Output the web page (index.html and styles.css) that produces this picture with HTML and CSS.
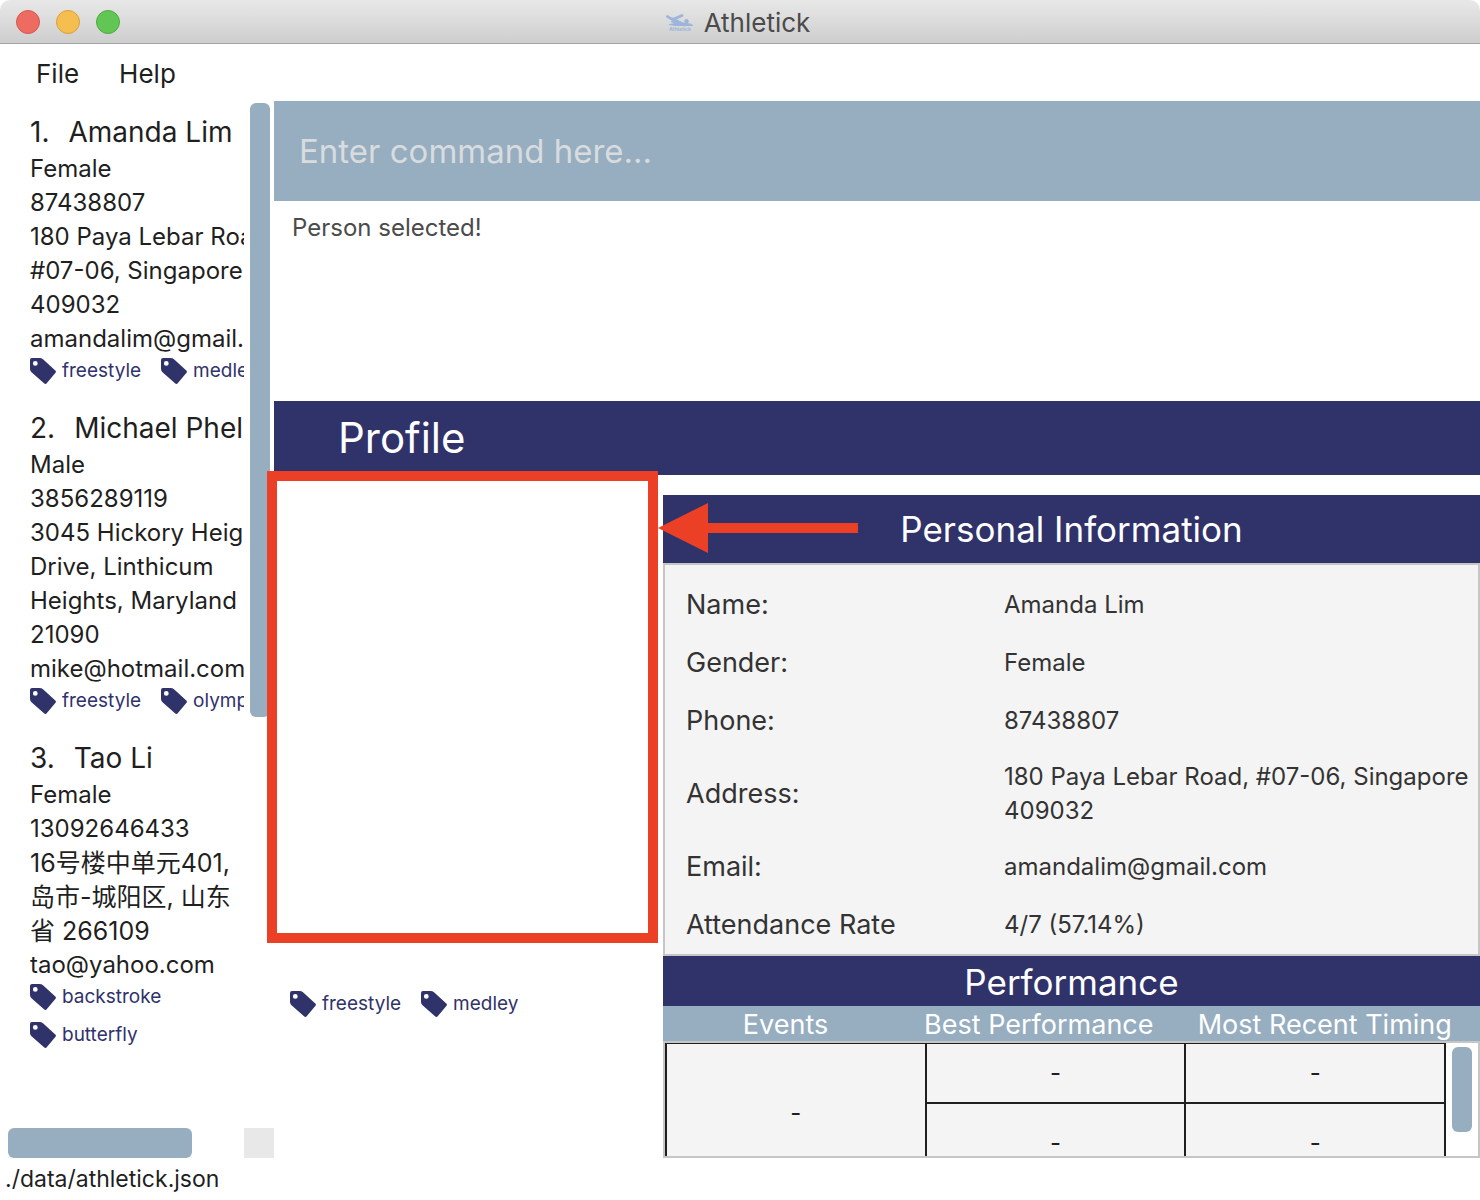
FILE: index.html
```html
<!DOCTYPE html>
<html lang="en">
<head>
<meta charset="utf-8">
<title>Athletick</title>
<link rel="stylesheet" href="styles.css">
</head>
<body>
<svg class="defs" aria-hidden="true">
  <symbol id="tag" viewBox="0 0 26 26">
    <path fill-rule="evenodd" d="M2 0H9.500Q11.500 0 13 1.200L25.300 12.500Q26.500 13.700 25.300 15L16.700 25.200Q15.500 26.600 14 25.300L1.500 14.200Q0 12.800 0 11V2Q0 0 2 0ZM5.300 3A2.400 2.400 0 1 0 5.300 7.800A2.400 2.400 0 1 0 5.300 3Z"/>
  </symbol>
</svg>

<header class="titlebar">
  <div class="lights">
    <button class="light light-close" aria-label="Close"></button>
    <button class="light light-min" aria-label="Minimise"></button>
    <button class="light light-max" aria-label="Zoom"></button>
  </div>
  <h1 class="title">
    <svg class="logo" viewBox="0 0 28 18" aria-hidden="true">
      <path d="M1.500 2.500Q5 5.500 8 5L16 1.500" fill="none" stroke="#9db5db" stroke-width="2.800" stroke-linecap="round" stroke-linejoin="round"/>
      <path d="M5 7.500L10 5.500L17 9L24 10L27 11.500H10L3 10.500L10 9.500Z" fill="#9db5db" stroke="#9db5db" stroke-width="1" stroke-linejoin="round"/>
      <circle cx="20.500" cy="7.300" r="2.200" fill="#9db5db"/>
      <text x="3" y="17" class="logo-text">Athletick</text>
    </svg>
    Athletick
  </h1>
</header>

<nav class="menubar">
  <button class="menu">File</button>
  <button class="menu">Help</button>
</nav>

<div class="main">
  <aside class="sidebar">
    <div class="sidebar-view">
      <ol class="people">
        <li class="person">
          <h2 class="person-name"><span class="index">1.</span>Amanda Lim</h2>
          <p class="line">Female</p>
          <p class="line">87438807</p>
          <p class="line">180 Paya Lebar Road,<br>#07-06, Singapore<br>409032</p>
          <p class="line">amandalim@gmail.com</p>
          <div class="tags">
            <span class="tag"><svg class="tag-icon"><use href="#tag"/></svg>freestyle</span>
            <span class="tag"><svg class="tag-icon"><use href="#tag"/></svg>medley</span>
          </div>
        </li>
        <li class="person">
          <h2 class="person-name"><span class="index">2.</span>Michael Phelps</h2>
          <p class="line">Male</p>
          <p class="line">3856289119</p>
          <p class="line">3045 Hickory Heights<br>Drive, Linthicum<br>Heights, Maryland<br>21090</p>
          <p class="line">mike@hotmail.com</p>
          <div class="tags">
            <span class="tag"><svg class="tag-icon"><use href="#tag"/></svg>freestyle</span>
            <span class="tag"><svg class="tag-icon"><use href="#tag"/></svg>olympics</span>
          </div>
        </li>
        <li class="person">
          <h2 class="person-name"><span class="index">3.</span>Tao Li</h2>
          <p class="line">Female</p>
          <p class="line">13092646433</p>
          <p class="line" lang="zh">16号楼中单元401,<br>岛市-城阳区, 山东<br>省 266109</p>
          <p class="line">tao@yahoo.com</p>
          <div class="tags tags-stacked">
            <span class="tag"><svg class="tag-icon"><use href="#tag"/></svg>backstroke</span>
            <span class="tag"><svg class="tag-icon"><use href="#tag"/></svg>butterfly</span>
          </div>
        </li>
      </ol>
    </div>
    <div class="vtrack"><div class="vthumb"></div></div>
    <div class="htrack"><div class="hthumb"></div></div>
    <div class="corner"></div>
  </aside>

  <main class="content">
    <input class="command" type="text" placeholder="Enter command here..." aria-label="Command">
    <output class="result">Person selected!</output>
    <h2 class="profile-title">Profile</h2>
    <div class="profile">
      <section class="photo">
        <div class="photo-frame"></div>
        <div class="tags">
          <span class="tag"><svg class="tag-icon"><use href="#tag"/></svg>freestyle</span>
          <span class="tag"><svg class="tag-icon"><use href="#tag"/></svg>medley</span>
        </div>
      </section>
      <section class="details">
        <h3 class="info-title">Personal Information</h3>
        <svg class="arrow" viewBox="0 0 200 50" aria-hidden="true">
          <path d="M0 25L50 0V20H200V30H50V50Z" fill="#eb4026"/>
        </svg>
        <div class="info-panel">
          <table class="info">
            <tr><th scope="row">Name:</th><td>Amanda Lim</td></tr>
            <tr><th scope="row">Gender:</th><td>Female</td></tr>
            <tr><th scope="row">Phone:</th><td>87438807</td></tr>
            <tr class="tall"><th scope="row">Address:</th><td>180 Paya Lebar Road, #07-06, Singapore 409032</td></tr>
            <tr><th scope="row">Email:</th><td>amandalim@gmail.com</td></tr>
            <tr><th scope="row">Attendance Rate</th><td>4/7 (57.14%)</td></tr>
          </table>
        </div>
        <h3 class="perf-title">Performance</h3>
        <table class="perf-head">
          <tr><th class="col-events">Events</th><th class="col-best">Best Performance</th><th class="col-recent">Most Recent Timing</th></tr>
        </table>
        <div class="perf-body">
          <table class="perf">
            <tr class="perf-first"><td rowspan="2">-</td><td>-</td><td>-</td></tr>
            <tr class="perf-second"><td>-</td><td>-</td></tr>
          </table>
          <div class="perf-track"><div class="perf-thumb"></div></div>
        </div>
      </section>
    </div>
  </main>
</div>

<footer class="status">./data/athletick.json</footer>
</body>
</html>
```

FILE: styles.css
```css
:root {
  --navy: #30326a;
  --steel: #97adc0;
  --red: #eb4026;
  --panel: #f4f4f4;
  --line: #c6c6c6;
  --ink: #1f1f1f;
}

* { box-sizing: border-box; }

body {
  margin: 0;
  min-height: 100vh;
  display: flex;
  flex-direction: column;
  background: #fff;
  color: var(--ink);
  font: 400 24px/34px Inter, "Noto Sans CJK SC", sans-serif;
}

h1, h2, h3, p, ol { margin: 0; padding: 0; font-weight: 400; }
ol { list-style: none; }
table { border-collapse: collapse; table-layout: fixed; width: 100%; }
th, td { padding: 0; font-weight: 400; }
button { font: inherit; color: inherit; background: none; border: 0; padding: 0; }
.defs { display: none; }

/* Window title bar */
.titlebar {
  height: 44px;
  display: grid;
  grid-template-columns: 1fr auto 1fr;
  align-items: center;
  padding: 0 16px;
  border-bottom: 1px solid #a3a3a3;
  border-radius: 10px 10px 0 0;
  background: linear-gradient(#e8e8e8, #cecece);
}
.lights { display: flex; gap: 16px; }
.light { width: 24px; height: 24px; border-radius: 50%; border: 1px solid; }
.light-close { background: #ed6b60; border-color: #d8574d; }
.light-min { background: #f5bf50; border-color: #d9a03c; }
.light-max { background: #62c655; border-color: #4dab3f; }
.title { display: flex; align-items: center; gap: 10px; padding: 2px 4px 0 0; font-size: 26px; color: #4b4b4b; }
.logo { width: 28px; height: 18px; }
.logo-text { font: 700 5px Inter, sans-serif; fill: #9db5db; }

/* Menu */
.menubar { height: 57px; display: flex; gap: 40px; padding: 2px 36px 0; align-items: center; font-size: 26px; }

.main { flex: 1; display: grid; grid-template-columns: 274px minmax(0, 1fr); }

/* Athlete list */
.sidebar { display: grid; grid-template-columns: 244px 30px; grid-template-rows: 1fr 30px; }
.sidebar-view { overflow: hidden; }
.people { width: 400px; }
.person { padding: 12px 0 12px 30px; }
.person-name { font-size: 28px; line-height: 39px; display: flex; gap: 19px; }
.line { white-space: nowrap; }
.line:lang(zh) { font-size: 25px; }
.vtrack { padding: 2px 6px 0; }
.vthumb { width: 20px; height: 614px; border-radius: 6px; background: var(--steel); }
.htrack { padding-left: 8px; }
.hthumb { width: 184px; height: 30px; border-radius: 6px; background: var(--steel); }
.corner { background: #e8e8e8; }

.tags { display: flex; gap: 9px 20px; min-height: 29px; }
.tags-stacked { flex-direction: column; }
.tag { display: flex; align-items: center; gap: 6px; height: 29px; font-size: 19px; line-height: 29px; color: var(--navy); }
.tag-icon { width: 26px; height: 26px; fill: var(--navy); }

/* Command and result */
.content { display: flex; flex-direction: column; }
.command {
  width: 100%;
  height: 100px;
  padding: 0 25px;
  border: 0;
  border-radius: 0;
  background: var(--steel);
  color: #fff;
  font: inherit;
  font-size: 33px;
}
.command::placeholder { color: #d8dcdf; opacity: 1; }
.result { display: block; height: 200px; padding: 10px 18px; color: #4b4b4b; }
.profile-title { padding: 0 64px; font-size: 42px; line-height: 74px; color: #fff; background: var(--navy); }

/* Profile */
.profile { flex: 1; display: grid; grid-template-columns: 389px minmax(0, 1fr); }
.photo { position: relative; padding: 514px 16px 0; }
.photo-frame { position: absolute; left: -7px; top: -4px; width: 391px; height: 472px; border: 10px solid var(--red); background: #fff; }
.details { position: relative; display: flex; flex-direction: column; padding-top: 20px; }
.info-title { font-size: 35px; line-height: 68px; text-align: center; color: #fff; background: var(--navy); }
.arrow { position: absolute; left: -5px; top: 28px; width: 200px; height: 50px; }
.info-panel { padding: 11px 0 0 21px; border: 2px solid var(--line); background: var(--panel); color: #333; }
.info th { width: 318px; font-size: 27px; text-align: left; }
.info td { padding-right: 8px; }
.info tr { height: 58px; }
.info .tall { height: 88px; }

.perf-title { padding-top: 2px; font-size: 35px; line-height: 48px; text-align: center; color: #fff; background: var(--navy); }
.perf-head { background: var(--steel); color: #fff; }
.perf-head th { height: 35px; padding-top: 3px; line-height: 32px; font-size: 27px; white-space: nowrap; }
.col-events { width: 30%; }
.col-best { width: 32%; }
.col-recent { width: 38%; }
.perf-body { flex: 1 0 116px; height: 116px; display: flex; align-items: flex-start; overflow: hidden; border: 2px solid var(--line); }
.perf { flex: 1; background: var(--panel); }
.perf td { width: 33%; border: 2px solid var(--ink); text-align: center; }
.perf .perf-first td { border-top-width: 1px; }
.perf-first { height: 59px; }
.perf-second { height: 80px; }
.perf-track { flex: none; width: 32px; padding: 4px 6px; }
.perf-thumb { width: 20px; height: 85px; border-radius: 6px; background: var(--steel); }

.status { height: 42px; line-height: 42px; padding: 0 5px; font-size: 23px; }
```
